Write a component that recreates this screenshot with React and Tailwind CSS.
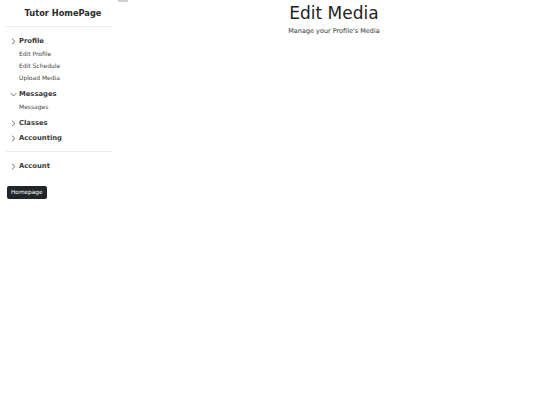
import React from "react";

const font = { fontFamily: '"DejaVu Sans", Verdana, sans-serif' };

function ChevRight() {
  return (
    <svg width="5" height="7" viewBox="0 0 5 7" className="shrink-0">
      <polyline points="1,0.8 4,3.5 1,6.2" fill="none" stroke="#666" strokeWidth="0.9" />
    </svg>
  );
}
function ChevDown() {
  return (
    <svg width="7" height="5" viewBox="0 0 7 5" className="shrink-0">
      <polyline points="0.6,1 3.5,4 6.4,1" fill="none" stroke="#666" strokeWidth="0.9" />
    </svg>
  );
}

function Header({ label, open, className = "" }) {
  return (
    <div className={`h-[14px] flex items-center ${className}`}>
      <div className={`flex items-center justify-end ${open ? "w-[13px] pr-[2px]" : "w-[13px] pr-[3px]"}`}>
        {open ? <ChevDown /> : <ChevRight />}
      </div>
      <span className="text-[6.8px] font-bold text-[#3a3a3a] leading-none">{label}</span>
    </div>
  );
}

function Sub({ label }) {
  return (
    <div className="h-[12px] flex items-center pl-[13px]">
      <span className="text-[6px] text-[#444] leading-none">{label}</span>
    </div>
  );
}

export default function App() {
  return (
    <div className="flex w-[540px] h-[405px] bg-white" style={font}>
      <div className="w-[118px] px-[6px] flex flex-col">
        <div className="h-[26px] flex items-center justify-center pl-[8px]">
          <span className="text-[8.25px] font-bold text-[#2a2a2a] leading-none">Tutor HomePage</span>
        </div>
        <div className="h-px bg-[#ececec]" />
        <Header label="Profile" className="mt-[7px]" />
        <Sub label="Edit Profile" />
        <Sub label="Edit Schedule" />
        <Sub label="Upload Media" />
        <Header label="Messages" open className="mt-[3px]" />
        <Sub label="Messages" />
        <Header label="Classes" className="mt-[3px]" />
        <Header label="Accounting" className="mt-[1px]" />
        <div className="h-px bg-[#ececec] mt-[6px]" />
        <Header label="Account" className="mt-[7px]" />
        <div className="mt-[13px] ml-[1px] flex">
          <div className="h-[13px] px-[4px] flex items-center bg-[#212529] rounded-[2px]">
            <span className="text-[5.8px] text-white leading-none">Homepage</span>
          </div>
        </div>
      </div>
      <div className="w-[10px] h-[2px] bg-[#cfcfcf]" />
      <div className="flex-1 flex flex-col items-center">
        <div className="mt-[3px] text-[17px] leading-[20px] text-[#222]">Edit Media</div>
        <div className="mt-[4px] text-[6.5px] leading-[9px] text-[#333]">Manage your Profile's Media</div>
      </div>
    </div>
  );
}
